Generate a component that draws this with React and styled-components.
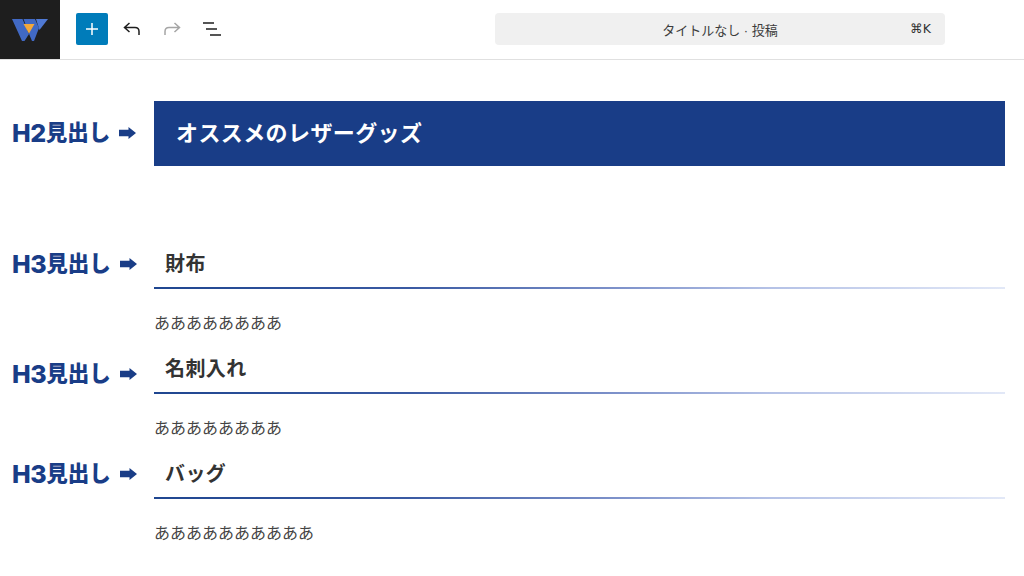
import React from 'react'
import styled, { createGlobalStyle } from 'styled-components'

const GlobalStyle = createGlobalStyle`
    html, body {
        margin: 0;
        padding: 0;
        background: #fff;
        font-family: "Liberation Sans", "Noto Sans CJK JP", sans-serif;
    }
`

const Page = styled.div`
    width: 1024px;
    height: 576px;
    overflow: hidden;
`

const Toolbar = styled.header`
    display: flex;
    align-items: flex-start;
    height: 59px;
    border-bottom: 1px solid #e0e0e0;
`

const LogoBox = styled.div`
    width: 60px;
    height: 59px;
    background: #1e1e1e;
    display: flex;
    align-items: center;
    justify-content: center;
`

const Tools = styled.div`
    display: flex;
    align-items: center;
    margin: 13px 0 0 16px;
    width: 419px;
`

const AddButton = styled.div`
    width: 32px;
    height: 32px;
    border-radius: 2px;
    background: #007cba;
    display: flex;
    align-items: center;
    justify-content: center;
    margin-right: 4px;
`

const IconButton = styled.div`
    width: 40px;
    height: 32px;
    display: flex;
    align-items: center;
    justify-content: center;
`

const CommandBar = styled.div`
    position: relative;
    margin-top: 13px;
    width: 450px;
    height: 32px;
    border-radius: 4px;
    background: #f0f0f0;
    display: flex;
    align-items: center;
    justify-content: center;
    font-size: 13px;
    color: #3c3c3c;
`

const Shortcut = styled.span`
    position: absolute;
    right: 14px;
    top: 8px;
    font-family: "DejaVu Sans", "Liberation Sans", sans-serif;
    font-size: 12.500px;
    line-height: 16px;
    color: #333;
`

const Content = styled.main`
    padding: 41px 19px 0 0;
`

const Row = styled.section`
    display: grid;
    grid-template-columns: 154px 851px;
    align-items: start;
    margin-top: ${({ $gap }) => $gap || 0}px;
`

const Label = styled.div`
    display: flex;
    align-items: center;
    padding: ${({ $top }) => $top}px 0 0 12px;
    font-size: 21.500px;
    line-height: 28px;
    font-weight: 900;
    color: #193d87;
    white-space: nowrap;
`

const LabelTag = styled.span`
    font-family: Inter, "Liberation Sans", sans-serif;
    font-size: 25px;
    font-weight: 800;
    letter-spacing: -0.500px;
`

const Arrow = styled.span`
    display: inline-flex;
    margin-left: 9px;
`

const Banner = styled.h2`
    margin: 0;
    height: 65px;
    padding-left: 22px;
    background: #193d87;
    color: #fff;
    font-size: 22px;
    font-weight: 700;
    letter-spacing: 0.400px;
    line-height: 65px;
`

const Heading = styled.h3`
    position: relative;
    margin: 0;
    height: 39px;
    padding-left: 11px;
    color: #333;
    font-size: 20px;
    font-weight: 700;
    letter-spacing: 0.400px;
    line-height: 28px;
    &::after {
        content: "";
        position: absolute;
        left: 0;
        right: 0;
        bottom: 0;
        height: 2px;
        background: linear-gradient(90deg, #1f4690 0%, #3a5aa3 30%, #7f93cb 55%, #b4c1e6 72%, #e2e8f7 100%);
    }
`

const Body = styled.p`
    margin: 23px 0 0 154px;
    padding: 0;
    font-size: 16px;
    line-height: 24px;
    color: #444;
`

const Logo = () => (
    <svg width="36" height="24" viewBox="0 0 36 24">
        <polygon points="0,1 10.500,1 17,16 12.500,23 10,23" fill="#4169c4" />
        <polygon points="11.500,1 23,1 27,10 22,23 20,23 17.500,17" fill="#4169c4" />
        <polygon points="24,1 36,1 27.500,12" fill="#4f79d4" />
        <polygon points="11.500,6 22.500,6 17,15.500" fill="#f5a83a" />
    </svg>
)

const ArrowIcon = () => (
    <svg width="17" height="12" viewBox="0 0 17 12">
        <path d="M0 2.800h9.500V0L17 6l-7.500 6V9.200H0z" fill="#193d87" />
    </svg>
)

const HeadingLabel = ({ tag, top }) => (
    <Label $top={top}>
        <LabelTag>{tag}</LabelTag>見出し
        <Arrow><ArrowIcon /></Arrow>
    </Label>
)

const sections = [
    { title: '財布', text: 'ああああああああ', gap: 84, top: 0 },
    { title: '名刺入れ', text: 'ああああああああ', gap: 19, top: 5 },
    { title: 'バッグ', text: 'ああああああああああ', gap: 19, top: 0 },
]

const App = () => (
    <Page>
        <GlobalStyle />
        <Toolbar>
            <LogoBox><Logo /></LogoBox>
            <Tools>
                <AddButton>
                    <svg width="14" height="14" viewBox="0 0 14 14">
                        <path d="M7 1v12M1 7h12" stroke="#fff" strokeWidth="1.500" />
                    </svg>
                </AddButton>
                <IconButton>
                    <svg width="18" height="14" viewBox="0 0 18 14" fill="none">
                        <path d="M6.500 1L1.500 5.500l5 4.500M2 5.500h10c2.500 0 4 1.500 4 4V13" stroke="#1e1e1e" strokeWidth="1.500" />
                    </svg>
                </IconButton>
                <IconButton>
                    <svg width="18" height="14" viewBox="0 0 18 14" fill="none">
                        <path d="M11.500 1l5 4.500-5 4.500M16 5.500H6c-2.500 0-4 1.500-4 4V13" stroke="#a5a5a5" strokeWidth="1.500" />
                    </svg>
                </IconButton>
                <IconButton>
                    <svg width="20" height="14" viewBox="0 0 20 14" fill="none">
                        <path d="M1 1h11M4 7h11M8 13h11" stroke="#1e1e1e" strokeWidth="1.500" />
                    </svg>
                </IconButton>
            </Tools>
            <CommandBar>
                タイトルなし · 投稿
                <Shortcut>⌘K</Shortcut>
            </CommandBar>
        </Toolbar>
        <Content>
            <Row>
                <HeadingLabel tag="H2" top={18} />
                <Banner>オススメのレザーグッズ</Banner>
            </Row>
            {sections.map((s) => (
                <React.Fragment key={s.title}>
                    <Row $gap={s.gap}>
                        <HeadingLabel tag="H3" top={s.top} />
                        <Heading>{s.title}</Heading>
                    </Row>
                    <Body>{s.text}</Body>
                </React.Fragment>
            ))}
        </Content>
    </Page>
)

export default App
